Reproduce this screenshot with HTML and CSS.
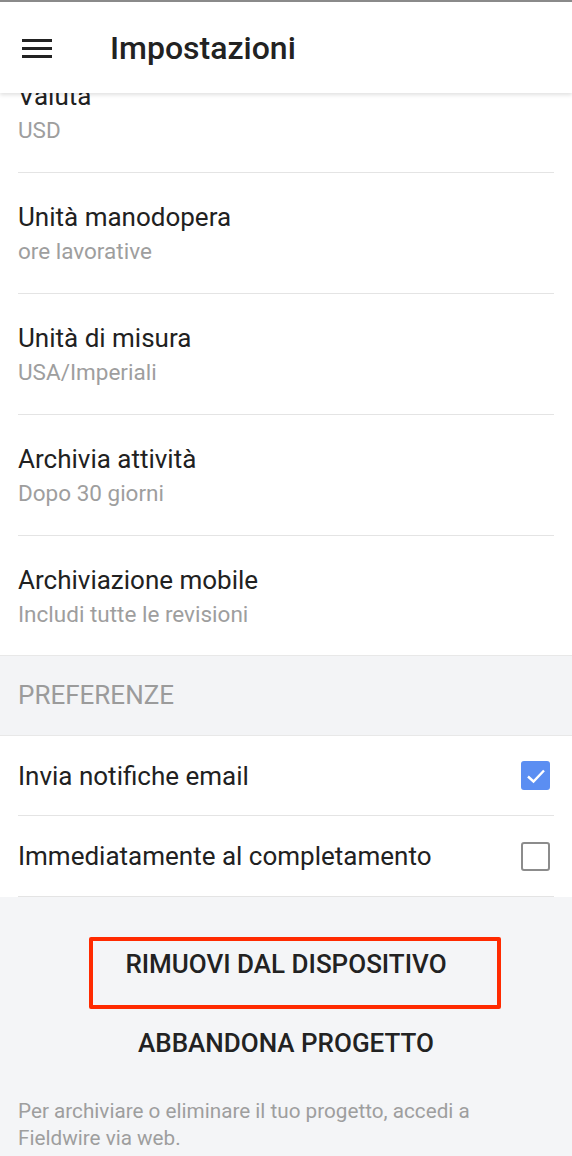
FILE: index.html
```html
<!DOCTYPE html>
<html lang="it">
<head>
    <meta charset="UTF-8">
    <meta name="viewport" content="width=device-width, initial-scale=1.0">
    <title>Impostazioni</title>
    <link rel="stylesheet" href="styles.css">
</head>
<body>

<div class="topbar">
    <div class="menu-icon">
        <svg width="30" height="20" viewBox="0 0 30 20">
            <rect x="0" y="0" width="30" height="3" fill="#222"/>
            <rect x="0" y="8" width="30" height="3" fill="#222"/>
            <rect x="0" y="16" width="30" height="3" fill="#222"/>
        </svg>
    </div>
    <div class="topbar-title">Impostazioni</div>
</div>

<div class="settings">
    <div class="setting first">
        <div class="setting-title">Valuta</div>
        <div class="setting-sub">USD</div>
    </div>
    <div class="setting">
        <div class="setting-title">Unità manodopera</div>
        <div class="setting-sub">ore lavorative</div>
    </div>
    <div class="setting">
        <div class="setting-title">Unità di misura</div>
        <div class="setting-sub">USA/Imperiali</div>
    </div>
    <div class="setting">
        <div class="setting-title">Archivia attività</div>
        <div class="setting-sub">Dopo 30 giorni</div>
    </div>
    <div class="setting last">
        <div class="setting-title">Archiviazione mobile</div>
        <div class="setting-sub">Includi tutte le revisioni</div>
    </div>

    <div class="section-header">PREFERENZE</div>

    <div class="check-row">
        <span>Invia notifiche email</span>
        <span class="checkbox checked">
            <svg width="20" height="16" viewBox="0 0 20 16">
                <path d="M2 8.5 L7.5 13.5 L18 2.5" fill="none" stroke="#fff" stroke-width="2.4"/>
            </svg>
        </span>
    </div>
    <div class="check-row">
        <span>Immediatamente al completamento</span>
        <span class="checkbox"></span>
    </div>
</div>

<div class="actions">
    <div class="action-btn">RIMUOVI DAL DISPOSITIVO</div>
    <div class="action-btn">ABBANDONA PROGETTO</div>
    <p class="note">Per archiviare o eliminare il tuo progetto, accedi a<br>Fieldwire via web.</p>
    <!-- riquadro di evidenziazione -->
    <div class="highlight-box"></div>
</div>

</body>
</html>
```

FILE: styles.css
```css
body {
    margin: 0;
    font-family: Roboto, "Liberation Sans", sans-serif;
    color: #212121;
    background-color: #f4f5f7;
    overflow: hidden;
}
.topbar {
    position: relative;
    z-index: 2;
    height: 91px;
    border-top: 2px solid #8a8a8a;
    background-color: #fff;
    display: flex;
    align-items: center;
    box-shadow: 0 2px 4px rgba(0, 0, 0, 0.12);
}
.menu-icon {
    width: 30px;
    height: 20px;
    margin-left: 22px;
    margin-top: 2px;
}
.topbar-title {
    margin-left: 58px;
    font-size: 32px;
    font-weight: 500;
    color: #222;
}
.settings {
    background-color: #fff;
}
.setting {
    margin: 0 18px;
    padding: 29px 0;
    border-bottom: 1px solid #e4e4e4;
}
.setting.first {
    margin-top: -41px;
}
.setting.last {
    margin: 0;
    padding: 29px 0 28px 18px;
    border-bottom: 1px solid #e8e8e8;
}
.setting-title {
    font-size: 26px;
    line-height: 30px;
}
.setting-sub {
    font-size: 22.5px;
    line-height: 26px;
    margin-top: 6px;
    color: #9e9e9e;
}
.section-header {
    background-color: #f3f4f6;
    height: 79px;
    line-height: 79px;
    padding-left: 18px;
    font-size: 26px;
    color: #9b9b9b;
    border-bottom: 1px solid #e8e8e8;
}
.check-row {
    margin: 0 18px;
    height: 79px;
    display: flex;
    align-items: center;
    justify-content: space-between;
    font-size: 26px;
    border-bottom: 1px solid #e4e4e4;
}
.check-row:last-child {
    height: 80px;
}
.checkbox {
    width: 25px;
    height: 25px;
    margin-right: 4px;
    border: 2px solid #8c8c8c;
    border-radius: 3px;
    display: flex;
    align-items: center;
    justify-content: center;
}
.checkbox.checked {
    background-color: #5b8ef2;
    border-color: #5b8ef2;
}
.actions {
    position: relative;
    padding-top: 52px;
}
.action-btn {
    text-align: center;
    font-size: 26px;
    line-height: 30px;
    font-weight: 500;
    color: #222;
}
.action-btn + .action-btn {
    margin-top: 49px;
}
.note {
    margin: 40px 18px 0 18px;
    font-size: 20.7px;
    line-height: 27px;
    color: #9e9e9e;
}
.highlight-box {
    position: absolute;
    left: 89px;
    top: 40px;
    width: 412px;
    height: 72px;
    box-sizing: border-box;
    border: 4px solid #ff2a00;
    border-radius: 2px;
}
```
